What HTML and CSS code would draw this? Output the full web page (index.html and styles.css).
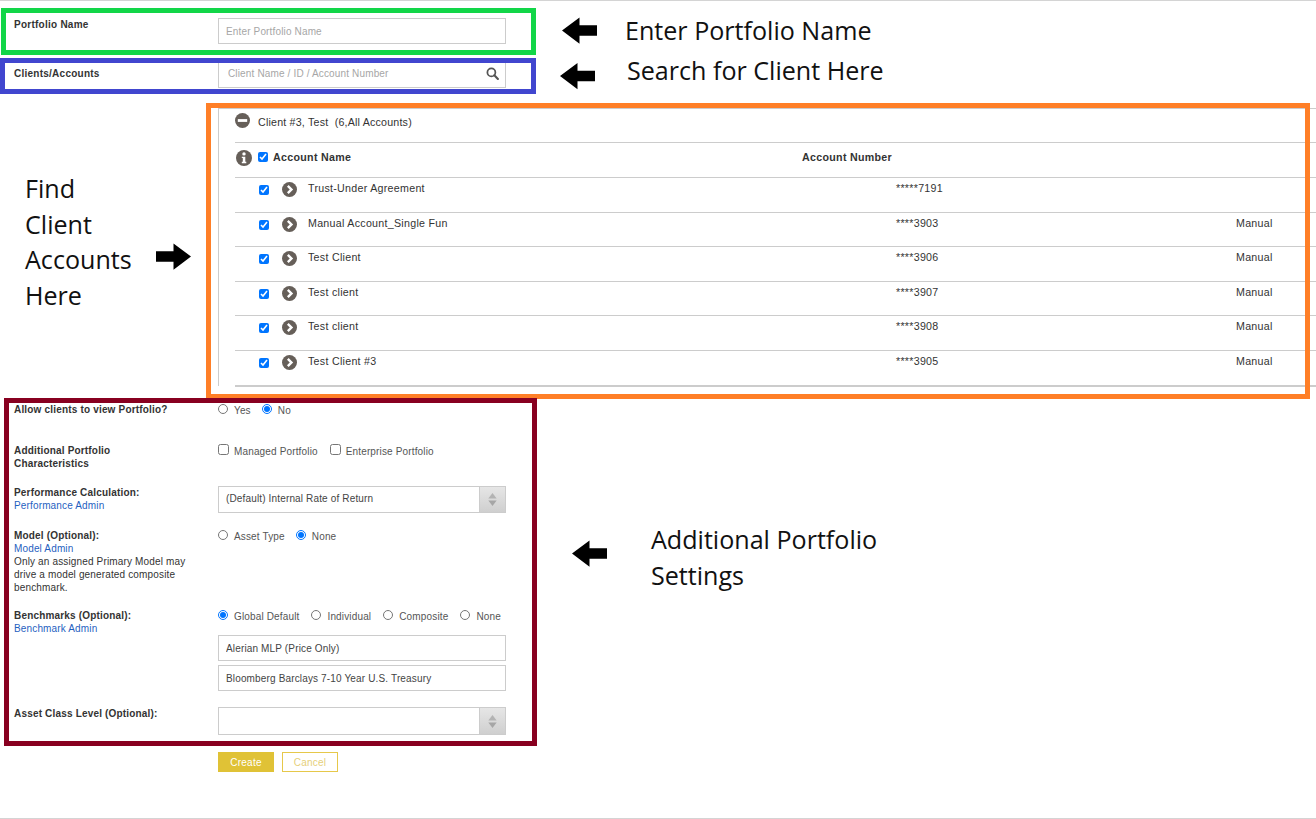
FILE: index.html
```html
<!DOCTYPE html>
<html lang="en">
<head>
<meta charset="utf-8">
<title>Create Portfolio</title>
<link rel="stylesheet" href="styles.css">
</head>
<body>
<svg class="sprite" width="0" height="0" aria-hidden="true">
  <symbol id="chev" viewBox="0 0 16 16"><circle cx="8" cy="8" r="8" fill="#665f59"/><path d="M7.100 3.200 11.900 8l-4.800 4.800-1.800-1.800 3-3-3-3z" fill="#fff"/></symbol>
  <symbol id="updown" viewBox="0 0 27 27"><path d="M13.500 6.500 18 12.500H9z" fill="#b3b3b3"/><path d="M9 14.500h9L13.500 20.500z" fill="#a6a6a6"/></symbol>
  <symbol id="arrow" viewBox="0 0 36 27"><path d="M0 13.500 18 0v8h18v11H18v8z" fill="#000"/></symbol>
</svg>

<main class="page">
  <div class="row row-name">
    <label class="label">Portfolio Name</label>
    <input class="field" type="text" placeholder="Enter Portfolio Name">
  </div>
  <div class="row row-client">
    <label class="label label-client">Clients/Accounts</label>
    <div class="search">
      <input class="field field-search" type="text" placeholder="Client Name / ID / Account Number">
      <svg class="search-icon" viewBox="0 0 14 14"><circle cx="5.800" cy="5.800" r="4.300" fill="none" stroke="#555" stroke-width="1.900"/><path d="m9 9 3.800 3.800" stroke="#555" stroke-width="2.300" stroke-linecap="round"/></svg>
    </div>
  </div>

  <section class="panel">
    <div class="client-head">
      <svg class="ico-15" viewBox="0 0 16 16"><circle cx="8" cy="8" r="8" fill="#665f59"/><rect x="3" y="6.500" width="10" height="3" fill="#fff"/></svg>
      <span>Client #3, Test&nbsp; (6,All Accounts)</span>
    </div>
    <div class="acct-head">
      <svg class="ico-info" viewBox="0 0 16 16"><circle cx="8" cy="8" r="8" fill="#665f59"/><circle cx="8" cy="3.900" r="1.700" fill="#fff"/><path d="M5.800 6.700h3.500v5.100h1v1.400H5.800v-1.400h1V8.100h-1z" fill="#fff"/></svg>
      <input class="check" type="checkbox" checked>
      <span class="strong">Account Name</span>
      <span class="strong">Account Number</span>
    </div>
    <div class="acct"><input class="check" type="checkbox" checked><svg class="ico-15"><use href="#chev"/></svg><span>Trust-Under Agreement</span><span>*****7191</span><span></span></div>
    <div class="acct"><input class="check" type="checkbox" checked><svg class="ico-15"><use href="#chev"/></svg><span>Manual Account_Single Fun</span><span>****3903</span><span>Manual</span></div>
    <div class="acct"><input class="check" type="checkbox" checked><svg class="ico-15"><use href="#chev"/></svg><span>Test Client</span><span>****3906</span><span>Manual</span></div>
    <div class="acct"><input class="check" type="checkbox" checked><svg class="ico-15"><use href="#chev"/></svg><span>Test client</span><span>****3907</span><span>Manual</span></div>
    <div class="acct"><input class="check" type="checkbox" checked><svg class="ico-15"><use href="#chev"/></svg><span>Test client</span><span>****3908</span><span>Manual</span></div>
    <div class="acct acct-last"><input class="check" type="checkbox" checked><svg class="ico-15"><use href="#chev"/></svg><span>Test Client #3</span><span>****3905</span><span>Manual</span></div>
  </section>

  <div class="row row-allow">
    <div class="label">Allow clients to view Portfolio?</div>
    <div class="opts">
      <label class="opt"><input class="radio" type="radio" name="view">Yes</label>
      <label class="opt"><input class="radio" type="radio" name="view" checked>No</label>
    </div>
  </div>
  <div class="row row-extra">
    <div class="label">Additional Portfolio Characteristics</div>
    <div class="opts opts-check">
      <label class="opt"><input class="box" type="checkbox">Managed Portfolio</label>
      <label class="opt"><input class="box" type="checkbox">Enterprise Portfolio</label>
    </div>
  </div>
  <div class="row row-perf">
    <div class="label">Performance Calculation:<a class="link" href="#">Performance Admin</a></div>
    <div class="select"><span class="select-text">(Default) Internal Rate of Return</span><span class="select-btn"><svg class="updown"><use href="#updown"/></svg></span></div>
  </div>
  <div class="row row-model">
    <div class="label">Model (Optional):<a class="link" href="#">Model Admin</a><span class="note">Only an assigned Primary Model may drive a model generated composite benchmark.</span></div>
    <div class="opts">
      <label class="opt"><input class="radio" type="radio" name="model">Asset Type</label>
      <label class="opt"><input class="radio" type="radio" name="model" checked>None</label>
    </div>
  </div>
  <div class="row row-bench">
    <div class="label">Benchmarks (Optional):<a class="link" href="#">Benchmark Admin</a></div>
    <div class="bench">
      <div class="opts opts-bench">
        <label class="opt"><input class="radio" type="radio" name="bench" checked>Global Default</label>
        <label class="opt"><input class="radio" type="radio" name="bench">Individual</label>
        <label class="opt"><input class="radio" type="radio" name="bench">Composite</label>
        <label class="opt"><input class="radio" type="radio" name="bench">None</label>
      </div>
      <input class="field field-value" type="text" value="Alerian MLP (Price Only)">
      <input class="field field-value" type="text" value="Bloomberg Barclays 7-10 Year U.S. Treasury">
    </div>
  </div>
  <div class="row row-asset">
    <div class="label">Asset Class Level (Optional):</div>
    <div class="select select-tall"><span class="select-text"></span><span class="select-btn"><svg class="updown"><use href="#updown"/></svg></span></div>
  </div>
  <div class="actions">
    <button class="btn btn-create" type="button">Create</button>
    <button class="btn btn-cancel" type="button">Cancel</button>
  </div>
</main>
<div class="foot-line"></div>

<div class="mark mark-green"></div>
<div class="mark mark-blue"></div>
<div class="mark mark-orange"></div>
<div class="mark mark-red"></div>

<svg class="arrow arrow-1"><use href="#arrow"/></svg>
<svg class="arrow arrow-2"><use href="#arrow"/></svg>
<svg class="arrow arrow-3"><use href="#arrow"/></svg>
<svg class="arrow arrow-4"><use href="#arrow"/></svg>
<div class="note-big nb-1">Enter Portfolio Name</div>
<div class="note-big nb-2">Search for Client Here</div>
<div class="note-big nb-3">Find<br>Client<br>Accounts<br>Here</div>
<div class="note-big nb-4">Additional Portfolio<br>Settings</div>
</body>
</html>
```

FILE: styles.css
```css
* { box-sizing: border-box; }
html, body { margin: 0; padding: 0; }
body {
  position: relative;
  height: 819px;
  overflow: hidden;
  background: #fff;
  color: #333;
  font-family: "Liberation Sans", Arial, sans-serif;
  font-size: 10px;
  letter-spacing: .15px;
}
.sprite { position: absolute; }
.page { border-top: 1px solid #d4d4d4; display: flex; flex-direction: column; }
.foot-line { position: absolute; left: 0; right: 0; top: 818px; height: 1px; background: #d4d4d4; }

.row { display: grid; grid-template-columns: 204px 288px; padding-left: 14px; align-items: start; }
.label { font-weight: 700; line-height: 13px; color: #333; padding-right: 30px; letter-spacing: .18px; }
.row-name { margin-top: 17px; height: 26px; }
.row-name .label { line-height: 13px; letter-spacing: .25px; }
.row-client { margin-top: 18px; height: 26px; }
.label-client { line-height: 24px; letter-spacing: .25px; }

.field {
  display: block;
  width: 288px;
  height: 26px;
  border: 1px solid #ccc;
  border-radius: 0;
  background: #fff;
  padding: 0 7px;
  outline: none;
  font: 10px "Liberation Sans", Arial, sans-serif;
  letter-spacing: .15px;
  color: #444;
}
.field::placeholder { color: #a6a6a6; opacity: 1; }
.search { position: relative; width: 288px; }
.field-search { padding: 0 24px 4px 9px; }
.search-icon { position: absolute; right: 7px; top: 5px; width: 13px; height: 13px; }

.panel { margin: 20px 0 0 218px; border-top: 1px solid #ccc; border-left: 1px solid #ccc; padding-left: 16px; height: 278px; font-size: 10.67px; letter-spacing: .2px; }
.client-head { display: flex; align-items: flex-start; height: 34px; border-bottom: 1px solid #ccc; padding-top: 4px; gap: 8px; }
.client-head span { line-height: 17px; margin-top: 1px; }
.ico-15 { width: 15px; height: 15px; display: block; flex: none; }
.ico-info { width: 16px; height: 16px; display: block; margin: -1px 0 0 1px; }
.acct-head { display: grid; grid-template-columns: 23px 15px 529px 1fr; height: 35px; border-bottom: 1px solid #ccc; align-items: start; padding-top: 8px; }
.check { width: 10px; height: 10px; margin: 1px 0 0; display: block; }
.strong { font-weight: 700; line-height: 13px; letter-spacing: .3px; }
.acct { display: grid; grid-template-columns: 23px 26px 588px 340px 1fr; height: 34.6px; border-bottom: 1px solid #ccc; padding-left: 24px; align-items: start; padding-top: 3px; letter-spacing: .28px; }
.acct > span { line-height: 14px; }
.acct .check { margin: 4px 0 0 0; }
.acct > .ico-15 { margin-top: 1px; }
.acct-last { border-bottom-width: 2px; height: 36px; }

.row-allow { margin-top: 17px; height: 41px; }
.row-extra { height: 42px; }
.row-perf { height: 43px; }
.row-model { height: 80px; }
.row-bench { height: 98px; }
.row-asset { height: 45px; }
.link { display: block; color: #1f5fbf; font-weight: 400; text-decoration: none; letter-spacing: .15px; }
.note { display: block; font-weight: 400; color: #333; letter-spacing: .15px; }

.opts { display: flex; align-items: center; gap: 11px; height: 13px; margin-top: 1px; }
.opt { display: flex; align-items: center; color: #555; line-height: 13px; }
.radio { width: 10px; height: 10px; margin: -4px 6px 0 0; }
.box { width: 11px; height: 11px; margin: -5px 5px 0 0; }
.opts-check { gap: 12px; }
.opts-bench { gap: 12px; margin-bottom: 12px; }
.bench { display: flex; flex-direction: column; }
.field-value { margin-bottom: 4px; }
.select { display: flex; width: 288px; height: 27px; border: 1px solid #ccc; background: #fff; }
.select-tall { height: 28px; }
.select-text { flex: 1; padding-left: 7px; line-height: 23px; color: #444; }
.select-btn { width: 26px; display: flex; align-items: center; justify-content: center; background: linear-gradient(#e6e6e6, #cfcfcf); border-left: 1px solid #ccc; }
.updown { width: 26px; height: 25px; }

.actions { display: flex; gap: 8px; padding-left: 218px; }
.btn { height: 20px; width: 56px; padding: 0; border-radius: 0; font: 10px "Liberation Sans", Arial, sans-serif; letter-spacing: .25px; }
.btn-create { background: #e0c236; border: 1px solid #e0c236; color: #fff; font-weight: 400; }
.btn-cancel { background: #fff; border: 1px solid #e6c84a; color: #e6cf7a; }

.mark { position: absolute; border-style: solid; border-width: 5px; }
.mark-green { left: 1px; top: 8px; width: 535px; height: 47px; border-color: #12d648; }
.mark-blue { left: 0; top: 58px; width: 536px; height: 36px; border-color: #4146cf; }
.mark-orange { left: 206px; top: 103px; width: 1104px; height: 296px; border-color: #ff7f27; }
.mark-red { left: 4px; top: 398px; width: 533px; height: 348px; border-color: #880020; }

.arrow { position: absolute; width: 35px; height: 27px; }
.arrow-1 { left: 562px; top: 17px; }
.arrow-2 { left: 560px; top: 62px; height: 28px; }
.arrow-3 { left: 156px; top: 243px; transform: scaleX(-1); }
.arrow-4 { left: 572px; top: 540px; }
.note-big { position: absolute; font-family: "Open Sans", sans-serif; font-size: 25.100px; line-height: 35.600px; letter-spacing: 0; color: #111; white-space: nowrap; }
.nb-1 { left: 625px; top: 13px; }
.nb-2 { left: 627px; top: 53px; }
.nb-3 { left: 25px; top: 171px; }
.nb-4 { left: 651px; top: 522px; }
```
